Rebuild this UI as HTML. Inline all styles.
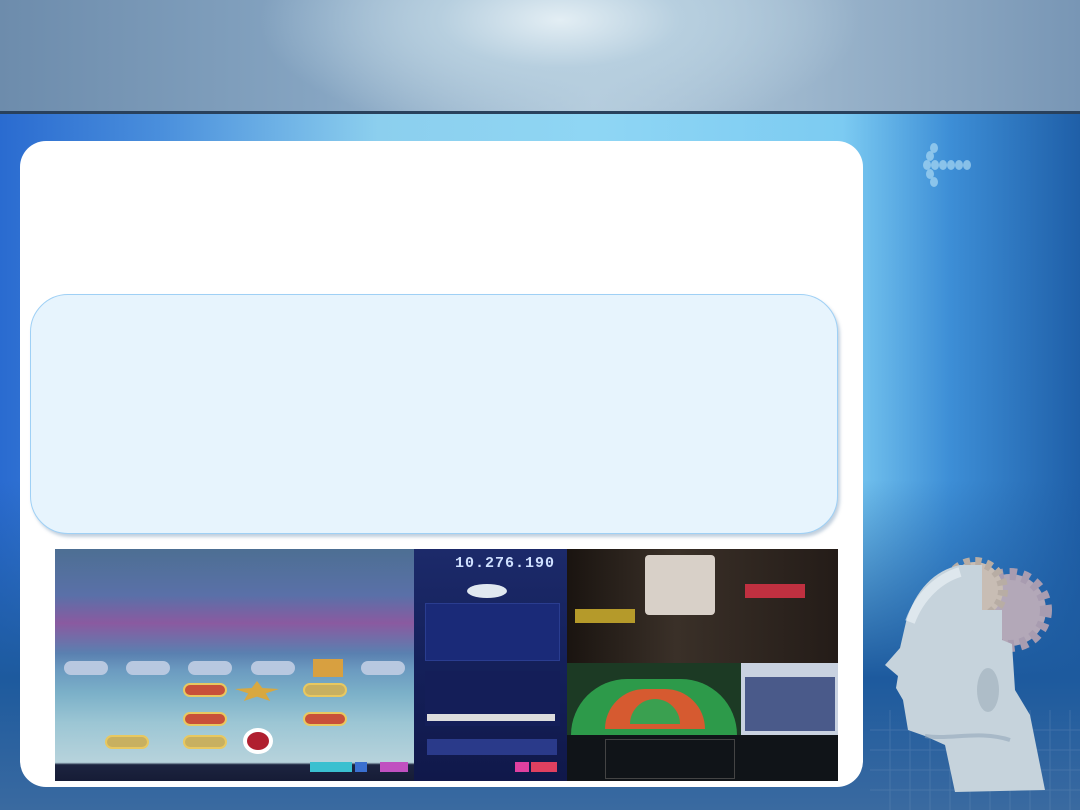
<!DOCTYPE html>
<html><head><meta charset="utf-8"><style>
*{margin:0;padding:0;box-sizing:border-box}
body{width:1080px;height:810px;overflow:hidden;position:relative;font-family:"Liberation Sans","Noto Sans CJK KR",sans-serif;background:#2b62a8}
.hdr{position:absolute;left:0;top:0;width:1080px;height:114px;
background:radial-gradient(ellipse 300px 120px at 560px 20px,#e3eef4 0%,#b7cfdf 40%,transparent 100%),linear-gradient(90deg,#6d8cac 0%,#86a5c2 30%,#b4cbdc 55%,#9bb5cc 75%,#7896b5 100%);
border-bottom:3px solid #29415c}
.glow{position:absolute;left:0;top:114px;width:1080px;height:696px;
background:linear-gradient(90deg,#2a6bd0 0%,#4a8fdc 15%,#8ccfee 35%,#8fd6f4 55%,#7ccbf2 78%,#3d8ed6 88%,#1f5fa8 100%)}
.glow2{position:absolute;left:0;top:480px;width:1080px;height:330px;background:linear-gradient(180deg,transparent,#1d5a9e 60%,#3a6aa0)}
.card{position:absolute;left:20px;top:141px;width:843px;height:646px;background:#fff;border-radius:26px}
.box{position:absolute;left:30px;top:294px;width:808px;height:240px;background:#e7f4fd;border:1px solid #9fd0f5;border-radius:38px;box-shadow:2px 3px 3px rgba(80,120,160,.35)}
.img{position:absolute;left:55px;top:549px;width:783px;height:232px;overflow:hidden}
.slot{position:absolute;left:0;top:0;width:359px;height:232px;background:linear-gradient(180deg,#4d6f93 0%,#5a70a8 20%,#8a5aa0 32%,#5a80b0 45%,#6b9ac0 52%,#7bb0c8 62%,#9cc6d4 75%,#b7d3dc 92%,#1c2440 93%,#161c36 100%)}
.mid{position:absolute;left:359px;top:0;width:153px;height:232px;background:linear-gradient(180deg,#1c2a6a,#14205a 50%,#10184a)}
.rt{position:absolute;left:512px;top:0;width:271px;height:114px;background:linear-gradient(90deg,#1a1410,#3a3028 40%,#241c18)}
.bac{position:absolute;left:512px;top:114px;width:174px;height:72px;background:#1c3a24}
.vid{position:absolute;left:686px;top:114px;width:97px;height:72px;background:#c9d2e0}
.chart{position:absolute;left:512px;top:186px;width:271px;height:46px;background:#101418}
.sym{position:absolute;width:44px;height:14px;border-radius:7px;background:#c8503a;border:2px solid #e8c860}
</style></head><body>
<div class="hdr"></div>
<div class="glow"></div>
<div class="glow2"></div>
<svg style="position:absolute;left:905px;top:140px" width="70" height="60">
<g fill="#a9d8f3" opacity=".7"><ellipse cx="29" cy="8" rx="4" ry="5"/><ellipse cx="25" cy="16" rx="4" ry="5"/><ellipse cx="22" cy="25" rx="4" ry="5"/><ellipse cx="30" cy="25" rx="4" ry="5"/><ellipse cx="38" cy="25" rx="4" ry="5"/><ellipse cx="46" cy="25" rx="4" ry="5"/><ellipse cx="54" cy="25" rx="4" ry="5"/><ellipse cx="62" cy="25" rx="4" ry="5"/><ellipse cx="25" cy="34" rx="4" ry="5"/><ellipse cx="29" cy="42" rx="4" ry="5"/></g></svg>
<svg style="position:absolute;left:870px;top:540px" width="210" height="270">
<g stroke="#6a90bb" stroke-width="1" opacity=".35">
<path d="M0 190H210M0 210H210M0 230H210M0 250H210M20 170V270M40 170V270M60 170V270M80 170V270M100 170V270M120 170V270M140 170V270M160 170V270M180 170V270M200 170V270"/></g>
<circle cx="140" cy="70" r="36" fill="#b3a8b8" stroke="#a89cb0" stroke-width="12" stroke-dasharray="7 6"/>
<circle cx="105" cy="50" r="28" fill="#c8bdb4" stroke="#b8ada4" stroke-width="10" stroke-dasharray="6 5"/>
<path d="M90 25 L112 25 L112 70 L132 70 L132 100 L142 104 L145 150 L160 175 L175 250 L85 252 L75 205 L55 196 L38 190 L33 160 L26 148 L28 136 L15 125 L30 108 L36 82 C45 50 65 30 90 25 Z" fill="#c6d3dc"/>
<path d="M40 82 C50 55 70 38 90 32" fill="none" stroke="#e8eff3" stroke-width="10" opacity=".7"/>
<path d="M55 196 C80 200 110 190 140 200" fill="none" stroke="#8aa0b4" stroke-width="4" opacity=".5"/>
<ellipse cx="118" cy="150" rx="11" ry="22" fill="#aebdc8"/>
</svg>
<div class="card"></div>
<div class="box"></div>
<div class="img">
<div class="slot"></div>
<div style="position:absolute;left:0;top:108px;width:359px;height:22px;display:flex;justify-content:space-around;align-items:center">
<span style="width:44px;height:14px;border-radius:7px;background:#b8c8e0"></span><span style="width:44px;height:14px;border-radius:7px;background:#b8c8e0"></span><span style="width:44px;height:14px;border-radius:7px;background:#b8c8e0"></span><span style="width:44px;height:14px;border-radius:7px;background:#b8c8e0"></span><span style="width:30px;height:18px;background:#d8a040"></span><span style="width:44px;height:14px;border-radius:7px;background:#b8c8e0"></span></div>
<div class="sym" style="left:128px;top:134px"></div><div class="sym" style="left:248px;top:134px;background:#c8b060"></div>
<div class="sym" style="left:128px;top:163px"></div><div class="sym" style="left:248px;top:163px"></div>
<div class="sym" style="left:50px;top:186px;background:#c8b060"></div><div class="sym" style="left:128px;top:186px;background:#c8b060"></div>
<div style="position:absolute;left:188px;top:179px;width:30px;height:26px;border-radius:50%;background:#b02030;border:4px solid #fff"></div>
<div style="position:absolute;left:180px;top:132px;width:44px;height:20px;background:#d8a840;clip-path:polygon(50% 0,62% 35%,100% 40%,70% 62%,80% 100%,50% 78%,20% 100%,30% 62%,0 40%,38% 35%)"></div>
<div style="position:absolute;left:255px;top:213px;width:42px;height:10px;background:#3ac0d0"></div>
<div style="position:absolute;left:300px;top:213px;width:12px;height:10px;background:#3a70d0"></div>
<div style="position:absolute;left:325px;top:213px;width:28px;height:10px;background:#c050c0"></div>
<div class="mid"></div>
<div style="position:absolute;left:400px;top:6px;color:#cfe0ff;font:bold 15px 'Liberation Mono',monospace;letter-spacing:1px">10.276.190</div>
<div style="position:absolute;left:412px;top:35px;width:40px;height:14px;border-radius:50%;background:#e0e8f0"></div>
<div style="position:absolute;left:370px;top:54px;width:135px;height:58px;background:#1a2a78;border:1px solid #2a3d90"></div>
<div style="position:absolute;left:370px;top:122px;width:135px;height:55px;background:#141e58"></div>
<div style="position:absolute;left:372px;top:165px;width:128px;height:7px;background:#ddd"></div>
<div style="position:absolute;left:372px;top:190px;width:130px;height:16px;background:#2a3a8a"></div>
<div style="position:absolute;left:460px;top:213px;width:14px;height:10px;background:#e040a0"></div>
<div style="position:absolute;left:476px;top:213px;width:26px;height:10px;background:#e04060"></div>
<div class="rt"></div>
<div style="position:absolute;left:590px;top:6px;width:70px;height:60px;background:#d8d0c8;border-radius:4px"></div>
<div style="position:absolute;left:690px;top:35px;width:60px;height:14px;background:#c03040"></div>
<div style="position:absolute;left:520px;top:60px;width:60px;height:14px;background:#b59a2a"></div>
<div class="bac"></div>
<div style="position:absolute;left:516px;top:130px;width:166px;height:56px;background:#2d9a4a;border-radius:80px 80px 0 0"></div>
<div style="position:absolute;left:550px;top:140px;width:100px;height:40px;background:#d65a30;border-radius:50px 50px 0 0"></div>
<div style="position:absolute;left:575px;top:150px;width:50px;height:25px;background:#3aa050;border-radius:25px 25px 0 0"></div>
<div class="vid"></div>
<div style="position:absolute;left:690px;top:128px;width:90px;height:54px;background:#4a5a8a"></div>
<div class="chart"></div>
<div style="position:absolute;left:550px;top:190px;width:130px;height:40px;border:1px solid #444"></div>
</div>
</body></html>
